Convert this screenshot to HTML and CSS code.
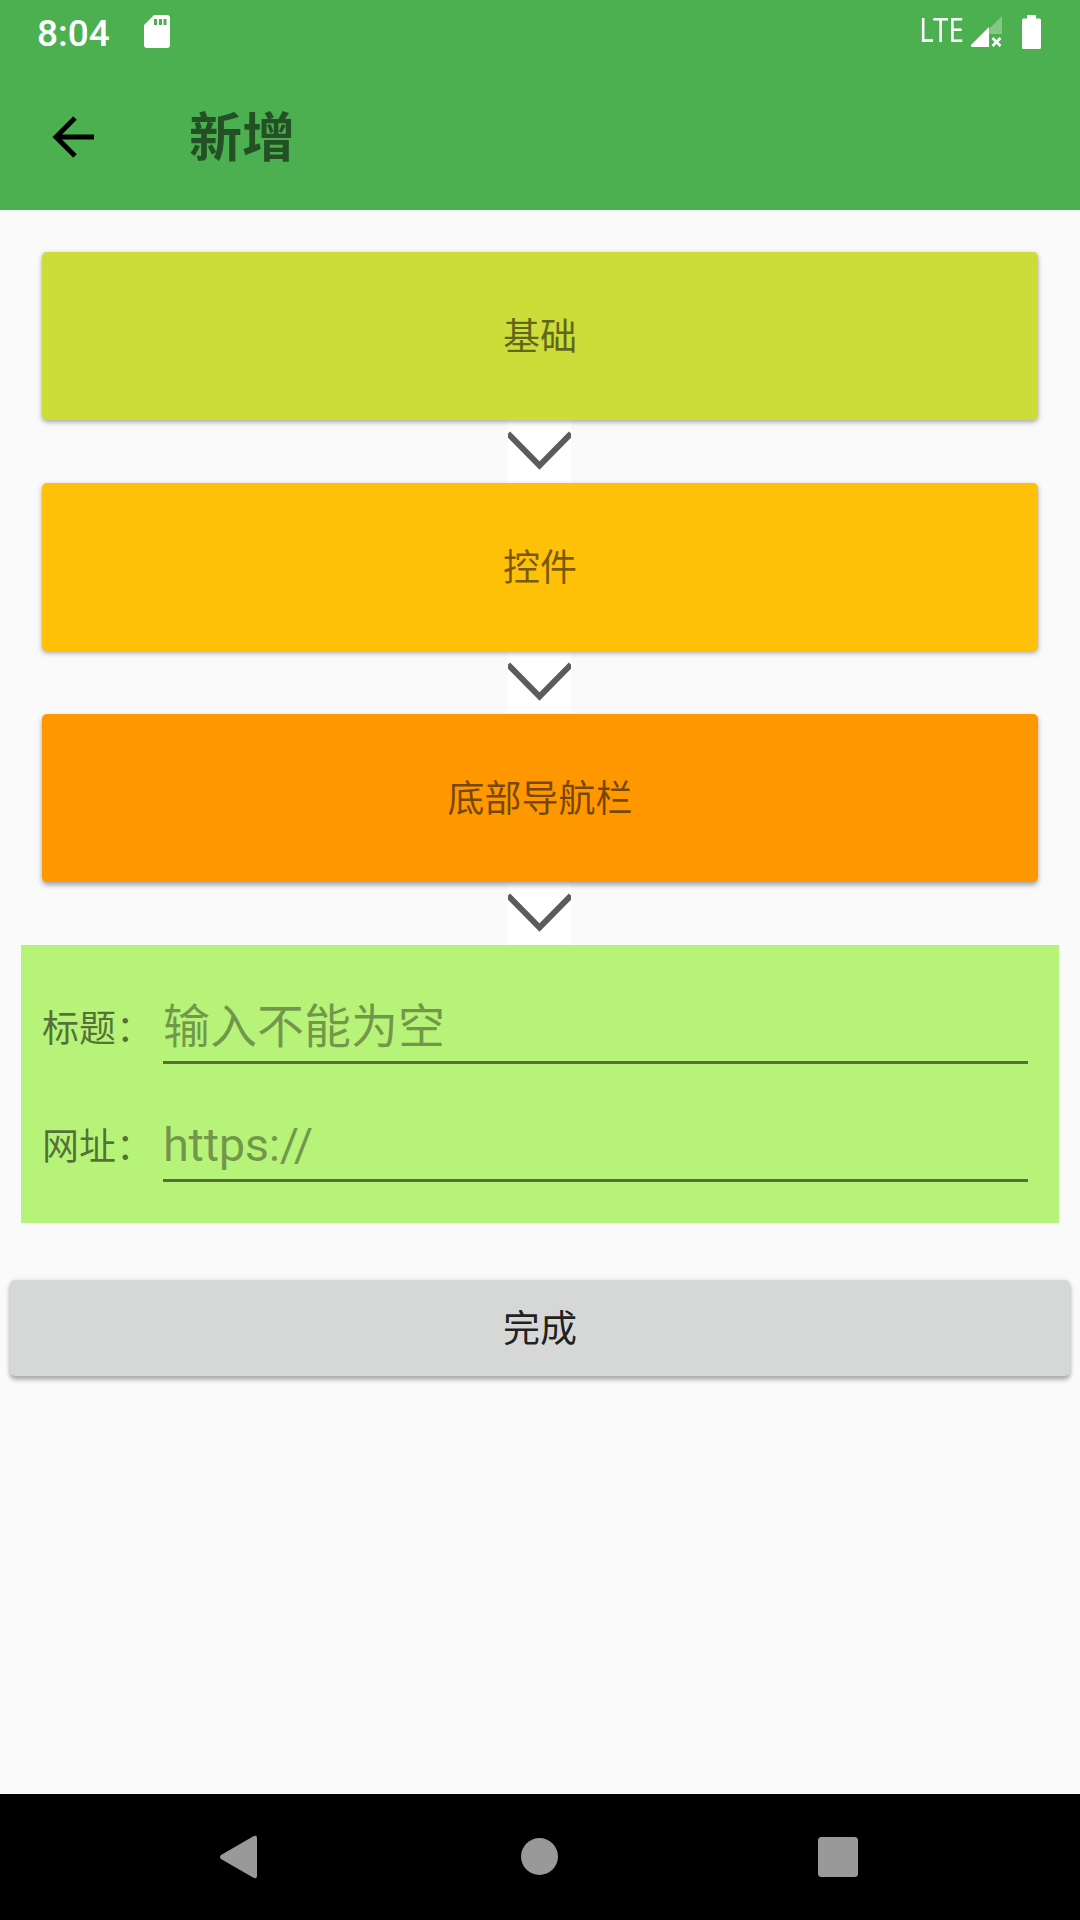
FILE: index.html
```html
<!DOCTYPE html>
<html lang="zh-CN">
<head>
<meta charset="utf-8">
<title>新增</title>
<link rel="stylesheet" href="styles.css">
</head>
<body>
<header class="header">
  <div class="status">
    <span class="clock">8:04</span>
    <svg class="sd" viewBox="0 0 26 33"><path fill="#fff" fill-rule="evenodd" d="M10 0H23Q26 0 26 3V30Q26 33 23 33H3Q0 33 0 30V10ZM10 4V10H13V4ZM15 4V10H18V4ZM19.500 4V10H22.500V4Z"/></svg>
    <span class="lte">LTE</span>
    <svg class="signal" viewBox="0 0 31 31"><path fill="#fff" fill-opacity=".3" d="M31 0V18H18V13Z"/><path fill="#fff" d="M0 31V29L18 11V31Z"/><path stroke="#fff" stroke-width="2.600" d="M21.500 22L29.500 30M29.500 22L21.500 30"/></svg>
    <svg class="battery" viewBox="0 0 19 34"><path fill="#fff" d="M5 0H14V3.500H17.500Q19 3.500 19 5V32.500Q19 34 17.500 34H1.500Q0 34 0 32.500V5Q0 3.500 1.500 3.500H5Z"/></svg>
  </div>
  <div class="toolbar">
    <svg class="back" viewBox="0 0 42 42"><path fill="none" stroke="#000" stroke-width="5" d="M23 2L4 21L23 40M4 21H42"/></svg>
    <h1 class="title">新增</h1>
  </div>
</header>
<main class="content">
  <button class="step lime">基础</button>
  <div class="arrow"><svg viewBox="0 0 63 63"><path d="M0 13.500L31.500 45.500L63 13.500"/></svg></div>
  <button class="step amber">控件</button>
  <div class="arrow"><svg viewBox="0 0 63 63"><path d="M0 13.500L31.500 45.500L63 13.500"/></svg></div>
  <button class="step orange">底部导航栏</button>
  <div class="arrow"><svg viewBox="0 0 63 63"><path d="M0 13.500L31.500 45.500L63 13.500"/></svg></div>
  <form class="form">
    <label class="row"><span class="label">标题：</span><input class="input" placeholder="输入不能为空"></label>
    <label class="row"><span class="label">网址：</span><input class="input url" placeholder="https://"></label>
  </form>
  <button class="done">完成</button>
</main>
<nav class="nav">
  <svg viewBox="0 0 1080 126"><g fill="#999"><path d="M221 61L253 42.500Q257 40.500 257 44V82Q257 85.500 253 83.500L221 65Q219 63 221 61Z"/><circle cx="539.500" cy="62.500" r="18.500"/><rect x="818" y="43" width="40" height="40" rx="3.500"/></g></svg>
</nav>
</body>
</html>
```
FILE: styles.css
```css
* { box-sizing: border-box; }
body { margin: 0; width: 1080px; height: 1920px; display: flex; flex-direction: column; background: #fafafa; font-family: Roboto, "Noto Sans CJK SC", sans-serif; overflow: hidden; }
button { border: 0; padding: 0; font: inherit; }
.header { height: 210px; background: #4caf50; }
.status { height: 63px; display: flex; align-items: center; padding: 0 39px 0 37px; color: #fff; }
.clock { font-size: 37px; font-weight: 500; width: 107px; padding-top: 3px; }
.sd { width: 26px; height: 33px; }
.lte { margin-left: auto; font-family: "Noto Sans", sans-serif; font-size: 32px; line-height: 40px; padding-bottom: 3px; transform: scaleX(.86); transform-origin: right; }
.signal { width: 31px; height: 31px; margin-left: 7px; }
.battery { width: 19px; height: 34px; margin-left: 20px; }
.toolbar { height: 147px; display: flex; align-items: center; padding-left: 52px; }
.back { width: 42px; height: 42px; }
.title { margin: 0 0 0 95px; padding-bottom: 6px; font-size: 53px; font-weight: 700; color: rgba(0,0,0,.54); }
.content { flex: 1; display: flex; flex-direction: column; align-items: center; padding-top: 42px; }
.step { position: relative; z-index: 1; width: 996px; height: 168px; padding-bottom: 5px; border-radius: 5px; font-size: 37px; font-weight: 400; color: rgba(0,0,0,.54); box-shadow: 0 2px 5px rgba(0,0,0,.35); }
.lime { background: #cddc39; }
.amber { background: #ffc107; }
.orange { background: #ff9800; box-shadow: 0 3px 5px rgba(0,0,0,.35); }
.arrow { width: 63px; height: 63px; margin-right: 1px; background: #fff; }
.arrow svg { display: block; width: 63px; height: 63px; }
.arrow path { fill: none; stroke: #5c5c5c; stroke-width: 6; filter: blur(.6px); }
.form { width: 1038px; height: 278px; background: #b7f279; padding: 20px 31px 0 21px; }
.row { display: flex; height: 118px; align-items: center; }
.label { width: 121px; padding-top: 3px; font-size: 37px; color: rgba(0,0,0,.54); }
.input { flex: 1; height: 80px; border: 0; border-bottom: 3px solid rgba(0,0,0,.54); background: none; font: 47px Roboto, "Noto Sans CJK SC", sans-serif; padding: 7px 0 0; }
.url { letter-spacing: -.3px; }
.input::placeholder { color: rgba(0,0,0,.38); }
.done { width: 1060px; height: 96px; padding-bottom: 4px; margin-top: 57px; border-radius: 5px; background: #d6d7d7; font-size: 37px; font-weight: 400; color: rgba(0,0,0,.87); box-shadow: 0 4px 4px rgba(0,0,0,.25), 0 1px 5px rgba(0,0,0,.15); }
.nav { height: 126px; background: #000; }
.nav svg { display: block; width: 1080px; height: 126px; }
```
